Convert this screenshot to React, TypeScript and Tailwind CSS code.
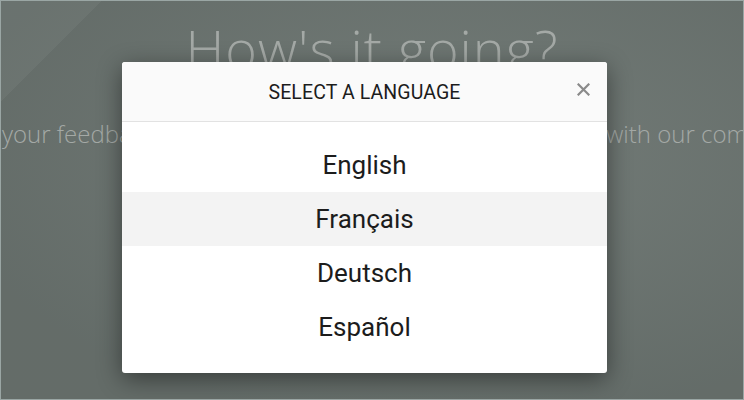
import React from "react";

const languages = ["English", "Français", "Deutsch", "Español"];

export default function App() {
  return (
    <div className="relative h-[400px] w-[744px] overflow-hidden border border-[#9aa6a4] bg-[#6c7571]">
      <div className="absolute inset-0 bg-[linear-gradient(135deg,rgba(255,255,255,0.05)_0,rgba(255,255,255,0.05)_71px,transparent_71px)]" />
      <div className="absolute inset-0 bg-[radial-gradient(ellipse_at_60%_40%,rgba(255,255,255,0.05),rgba(0,0,0,0.08)_80%)]" />

      {/* background page content */}
      <div className="relative flex flex-col font-['Open_Sans',sans-serif] text-[#a4a9a6]">
        <h1 className="mt-[15px] self-center whitespace-nowrap text-[54px] font-light leading-[64px] tracking-[1px]">
          How's it going?
        </h1>
        <p className="mt-[38px] flex whitespace-nowrap text-[24px] font-light leading-[32px]">
          <span className="w-[605px] shrink-0 overflow-hidden pl-[1px]">your feedback helps us grow and improve</span>
          <span className="shrink-0">with our community</span>
        </p>
      </div>

      {/* modal */}
      <div className="absolute left-[121px] top-[61px] flex h-[311px] w-[485px] flex-col rounded-[3px] bg-white font-['Roboto',sans-serif] text-[#1c1c1c] shadow-[0_6px_24px_rgba(0,0,0,0.45)]">
        <div className="relative flex h-[60px] items-center justify-center rounded-t-[3px] border-b border-[#e2e2e2] bg-[#fafafa]">
          <span className="pt-[2px] text-[19.5px] leading-none tracking-[0.1px]">SELECT A LANGUAGE</span>
          <button className="absolute right-[17px] top-[20px] flex h-[14px] w-[14px] items-center justify-center">
            <svg width="13" height="13" viewBox="0 0 13 13">
              <path d="M1.5 1.5 L11.5 11.5 M11.5 1.5 L1.5 11.5" stroke="#8a8a8a" strokeWidth="2.2" strokeLinecap="square" />
            </svg>
          </button>
        </div>
        <div className="flex flex-col pt-[16px]">
          {languages.map((l, i) => (
            <div
              key={l}
              className={`flex h-[54px] items-center justify-center text-[26px] leading-none ${i === 1 ? "bg-[#f3f3f3]" : ""}`}
            >
              {l}
            </div>
          ))}
        </div>
      </div>
    </div>
  );
}
